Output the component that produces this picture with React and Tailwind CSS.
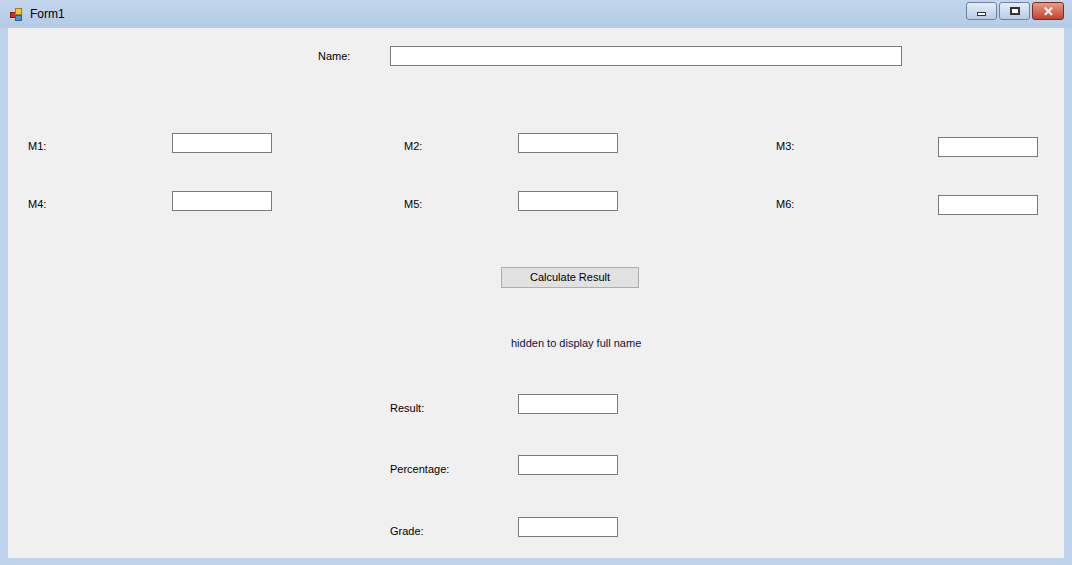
export default function App() {
  const tb = "h-[20px] w-[100px] bg-white border border-[#7a7a7a] shrink-0";
  const lbl = "shrink-0 text-[11px] text-black leading-[13px]";
  return (
    <div className="w-[1072px] h-[565px] bg-[#bcd3ea] flex flex-col" style={{ fontFamily: '"Liberation Sans", Arial, sans-serif' }}>
      <div className="h-[28px] flex items-center bg-gradient-to-b from-[#c3d6ec] to-[#b3cbe6] pl-[10px] pr-[8px]">
        <svg width="14" height="14" viewBox="0 0 14 14" className="mr-[6px]">
          <rect x="0.5" y="5.5" width="5" height="5" fill="#d42a1f" stroke="#7a1a12" />
          <rect x="5.5" y="1.5" width="6" height="6" fill="#f6c531" stroke="#a57d14" />
          <rect x="5.5" y="8.5" width="6" height="5" fill="#4d8ee0" stroke="#285d9e" />
        </svg>
        <span className="text-[12px] text-black">Form1</span>
        <div className="ml-auto flex gap-[2px] mt-[-6px]">
          <div className="w-[31px] h-[18px] rounded-[3px] border border-[#6d83a3] bg-gradient-to-b from-[#e5eef8] to-[#b9cbe2] flex items-center justify-center">
            <div className="w-[9px] h-[4px] bg-white border border-[#333] mt-[5px]" />
          </div>
          <div className="w-[31px] h-[18px] rounded-[3px] border border-[#6d83a3] bg-gradient-to-b from-[#e5eef8] to-[#b9cbe2] flex items-center justify-center">
            <div className="w-[10px] h-[8px] bg-white border-2 border-[#333]" />
          </div>
          <div className="w-[32px] h-[18px] rounded-[3px] border border-[#7a2b1e] bg-gradient-to-b from-[#e89a86] to-[#c1402a] flex items-center justify-center">
            <span className="text-white text-[13px] font-bold leading-none">✕</span>
          </div>
        </div>
      </div>
      <div className="mx-[8px] mb-[7px] flex-1 bg-[#f0f0f0] flex flex-col relative">
        <div className="flex items-center h-[20px] mt-[18px]">
          <span className={`${lbl} ml-[310px] w-[72px]`}>Name:</span>
          <div className="h-[20px] w-[512px] bg-white border border-[#7a7a7a]" />
        </div>
        <div className="flex items-start h-[24px] mt-[67px]">
          <span className={`${lbl} ml-[20px] w-[144px] mt-[7px]`}>M1:</span>
          <div className={tb} />
          <span className={`${lbl} ml-[132px] w-[114px] mt-[7px]`}>M2:</span>
          <div className={tb} />
          <span className={`${lbl} ml-[158px] w-[162px] mt-[7px]`}>M3:</span>
          <div className={`${tb} mt-[4px]`} />
        </div>
        <div className="flex items-start h-[24px] mt-[34px]">
          <span className={`${lbl} ml-[20px] w-[144px] mt-[7px]`}>M4:</span>
          <div className={tb} />
          <span className={`${lbl} ml-[132px] w-[114px] mt-[7px]`}>M5:</span>
          <div className={tb} />
          <span className={`${lbl} ml-[158px] w-[162px] mt-[7px]`}>M6:</span>
          <div className={`${tb} mt-[4px]`} />
        </div>
        <div className="ml-[493px] mt-[52px] w-[138px] h-[21px] bg-[#e1e1e1] border border-[#adadad] flex items-center justify-center text-[11px] text-black">
          Calculate Result
        </div>
        <div className="ml-[503px] mt-[49px] text-[11px] text-[#101040] leading-[13px]">hidden to display full name</div>
        <div className="flex items-start h-[20px] mt-[44px]">
          <span className={`${lbl} ml-[382px] w-[128px] mt-[8px]`}>Result:</span>
          <div className={tb} />
        </div>
        <div className="flex items-start h-[20px] mt-[41px]">
          <span className={`${lbl} ml-[382px] w-[128px] mt-[8px]`}>Percentage:</span>
          <div className={tb} />
        </div>
        <div className="flex items-start h-[20px] mt-[42px]">
          <span className={`${lbl} ml-[382px] w-[128px] mt-[8px]`}>Grade:</span>
          <div className={tb} />
        </div>
      </div>
    </div>
  );
}
